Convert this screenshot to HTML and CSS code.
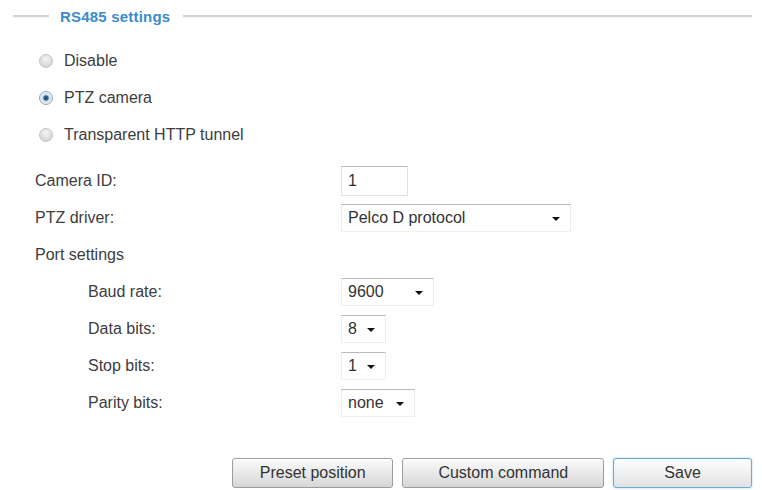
FILE: index.html
```html
<!DOCTYPE html>
<html lang="en">
<head>
<meta charset="utf-8">
<title>RS485 settings</title>
<link rel="stylesheet" href="styles.css">
</head>
<body>
<div class="panel">
  <div class="legend">
    <span class="rule rule-short"></span>
    <h2 class="legend-title">RS485 settings</h2>
    <span class="rule rule-long"></span>
  </div>

  <ul class="modes">
    <li class="mode"><span class="radio"></span><span class="mode-label">Disable</span></li>
    <li class="mode"><span class="radio radio-on"></span><span class="mode-label">PTZ camera</span></li>
    <li class="mode"><span class="radio"></span><span class="mode-label">Transparent HTTP tunnel</span></li>
  </ul>

  <div class="fields">
    <div class="label">Camera ID:</div>
    <div class="control"><div class="textbox w-id">1</div></div>

    <div class="label">PTZ driver:</div>
    <div class="control"><div class="select w-driver"><span>Pelco D protocol</span><i class="caret"></i></div></div>

    <div class="label">Port settings</div>
    <div class="control"></div>

    <div class="label sub">Baud rate:</div>
    <div class="control"><div class="select w-baud"><span>9600</span><i class="caret"></i></div></div>

    <div class="label sub">Data bits:</div>
    <div class="control"><div class="select w-bits"><span>8</span><i class="caret"></i></div></div>

    <div class="label sub">Stop bits:</div>
    <div class="control"><div class="select w-bits"><span>1</span><i class="caret"></i></div></div>

    <div class="label sub">Parity bits:</div>
    <div class="control"><div class="select w-parity"><span>none</span><i class="caret"></i></div></div>
  </div>

  <div class="actions">
    <button class="btn btn-preset" type="button">Preset position</button>
    <button class="btn btn-custom" type="button">Custom command</button>
    <button class="btn btn-save" type="button">Save</button>
  </div>
</div>
</body>
</html>
```

FILE: styles.css
```css
html, body {
  margin: 0;
  padding: 0;
  background: #ffffff;
}

body {
  font-family: "Liberation Sans", Arial, sans-serif;
  font-size: 16px;
  color: #3d3d3d;
  width: 762px;
  height: 490px;
  overflow: hidden;
}

.panel {
  padding: 0 10px 0 0;
}

/* fieldset-style heading with a rule on both sides */
.legend {
  display: flex;
  align-items: center;
  height: 32px;
  padding-left: 13px;
}

.rule {
  height: 2px;
  background: #d4d4d4;
  box-shadow: 0 1px 1px rgba(0, 0, 0, 0.05);
}

.rule-short {
  width: 36px;
}

.rule-long {
  flex: 1;
}

.legend-title {
  margin: 0 13px 0 11px;
  font-size: 15px;
  font-weight: bold;
  color: #3b8ccc;
  letter-spacing: 0.2px;
}

/* radio list */
.modes {
  list-style: none;
  margin: 10px 0 0 0;
  padding: 0 0 0 39px;
}

.mode {
  display: flex;
  align-items: center;
  height: 37px;
}

.radio {
  width: 14px;
  height: 14px;
  border-radius: 50%;
  border: 1px solid #c4c4c4;
  background: radial-gradient(circle at 50% 35%, #f4f4f4 0%, #dadada 65%, #c6c6c6 100%);
  box-sizing: border-box;
  flex: none;
}

.radio-on {
  border-color: #8aa9c4;
  background: radial-gradient(circle at 50% 50%, #1f4e7a 0%, #2c5f8e 26%, #c9d9e8 36%, #e9f0f6 66%, #b9cbdb 100%);
}

.mode-label {
  margin-left: 11px;
}

/* label / control grid */
.fields {
  display: grid;
  grid-template-columns: 306px 1fr;
  grid-auto-rows: 37px;
  margin-top: 9px;
  padding-left: 35px;
}

.label,
.control {
  display: flex;
  align-items: center;
}

.label.sub {
  padding-left: 53px;
}

.textbox,
.select {
  box-sizing: border-box;
  display: flex;
  align-items: center;
  background: #ffffff;
  border: 1px solid #e2e2e2;
  border-top-color: #b9b9b9;
  padding-left: 6px;
  color: #333333;
}

.textbox {
  height: 30px;
}

.select {
  height: 28px;
  justify-content: space-between;
  padding-right: 10px;
  border-left-color: #ececec;
  border-right-color: #ececec;
  border-bottom-color: #f0f0f0;
}

.caret {
  width: 0;
  height: 0;
  border-left: 4px solid transparent;
  border-right: 4px solid transparent;
  border-top: 4px solid #111111;
  margin-top: 2px;
}

.w-id { width: 67px; }
.w-driver { width: 230px; }
.w-baud { width: 93px; }
.w-bits { width: 45px; }
.w-parity { width: 74px; }

/* bottom buttons */
.actions {
  display: flex;
  gap: 9px;
  margin-top: 37px;
  padding-left: 232px;
}

.btn {
  height: 30px;
  box-sizing: border-box;
  font-family: "Liberation Sans", Arial, sans-serif;
  font-size: 16px;
  color: #333333;
  border: 1px solid #9c9c9c;
  border-radius: 3px;
  background: linear-gradient(#fbfbfb, #ebebeb 45%, #d6d6d6);
  box-shadow: inset 0 1px 0 #ffffff;
  padding: 0;
}

.btn-preset { width: 164px; }
.btn-custom { width: 205px; }

.btn-save {
  width: 141px;
  border-color: #6aaed2;
  background: linear-gradient(#ffffff, #f0f0f0 50%, #e2e2e2);
  box-shadow: 0 0 2px rgba(80, 160, 210, 0.6), inset 0 0 1px #bfe0f0;
}
```
